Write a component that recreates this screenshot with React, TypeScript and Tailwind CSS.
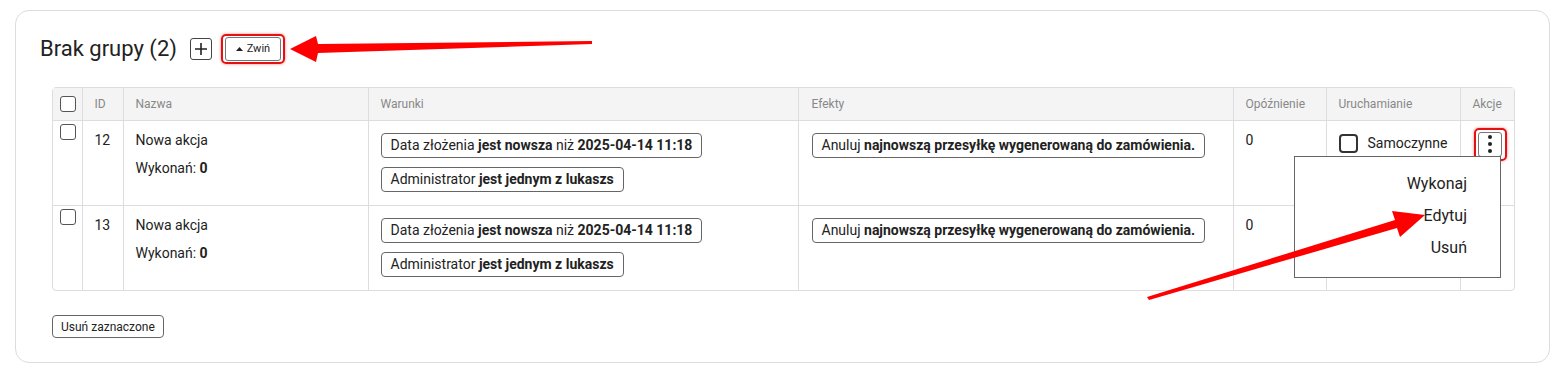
import React from "react";

const font = { fontFamily: "Roboto, 'Noto Sans', Arial, sans-serif" };

function Box() {
  return <span className="block w-[16px] h-[16px] rounded-[3px] border border-[#555] bg-white" />;
}

function Badge({ children }: { children: React.ReactNode }) {
  return (
    <span className="inline-block h-[25px] leading-[23px] px-[9px] border border-[#666] rounded-[4px] text-[14px] text-[#222] whitespace-nowrap">
      {children}
    </span>
  );
}

function Row({ id, menu }: { id: number; menu?: boolean }) {
  return (
    <tr className="h-[85px] align-top">
      <td className="border-t border-[#ddd] pl-[7px] pt-[3px]">
        <Box />
      </td>
      <td className="border-t border-l border-[#ddd] pl-[12px] pt-[9px] leading-[20px] text-[14px]">{id}</td>
      <td className="border-t border-l border-[#ddd] pl-[12px] pt-[9px] leading-[20px] text-[14px]">
        <div>Nowa akcja</div>
        <div className="mt-[8px]">
          Wykonań: <b>0</b>
        </div>
      </td>
      <td className="border-t border-l border-[#ddd] pl-[12px] pt-[12px]">
        <div className="flex flex-col items-start gap-[9px]">
          <Badge>
            Data złożenia <b>jest nowsza</b> niż <b>2025-04-14 11:18</b>
          </Badge>
          <Badge>
            Administrator <b>jest jednym z lukaszs</b>
          </Badge>
        </div>
      </td>
      <td className="border-t border-l border-[#ddd] pl-[13px] pt-[12px]">
        <Badge>
          Anuluj <b>najnowszą przesyłkę wygenerowaną do zamówienia.</b>
        </Badge>
      </td>
      <td className="border-t border-l border-[#ddd] pl-[12px] pt-[9px] leading-[20px] text-[14px]">0</td>
      <td className="border-t border-l border-[#ddd] pl-[12px] pt-[12px]">
        <div className="flex items-center gap-[10px] text-[14px]">
          <span className="block w-[19px] h-[19px] rounded-[4px] border-2 border-[#333]" />
          Samoczynne
        </div>
      </td>
      <td className="border-t border-l border-[#ddd] pt-[7px] relative">
        {menu && (
          <>
            <div className="ml-[13px] w-[33px] h-[33px] border-2 border-[#e51010] rounded-[5px] shadow-[0_0_3px_rgba(255,0,0,0.5)] flex items-center justify-center">
              <div className="w-[24px] h-[25px] border border-[#777] rounded-[3px] bg-white flex flex-col items-center justify-center gap-[3px]">
                <span className="w-[4px] h-[4px] rounded-full bg-[#222]" />
                <span className="w-[4px] h-[4px] rounded-full bg-[#222]" />
                <span className="w-[4px] h-[4px] rounded-full bg-[#222]" />
              </div>
            </div>
            <div className="absolute z-10 right-[13px] top-[35px] w-[207px] bg-white border border-[#666] pt-[11px] pb-[13px] pr-[33px] text-right text-[16px] leading-[32px] text-[#222]">
              <div>Wykonaj</div>
              <div>Edytuj</div>
              <div>Usuń</div>
            </div>
          </>
        )}
      </td>
    </tr>
  );
}

export default function App() {
  const th = "border-l border-[#ddd] text-left font-normal text-[12px] text-[#888] pl-[12px]";
  return (
    <div className="relative w-[1564px] h-[376px] bg-white pt-[10px] pl-[15px] pr-[14px] text-[#222]" style={font}>
      <div className="h-[353px] border border-[#dcdcdc] rounded-[14px] pl-[24px] pt-[23px]">
        <div className="flex items-center h-[30px]">
          <h2 className="text-[22px] text-[#222] leading-[26px]">Brak grupy (2)</h2>
          <button className="ml-[13px] w-[22px] h-[22px] border border-[#444] rounded-[3px] flex items-center justify-center">
            <svg width="14" height="14" viewBox="0 0 14 14">
              <path d="M7 1v12M1 7h12" stroke="#222" strokeWidth="1.6" />
            </svg>
          </button>
          <div className="ml-[9px] w-[64px] h-[30px] border-2 border-[#e51010] rounded-[5px] shadow-[0_0_3px_rgba(255,0,0,0.5)] flex items-center justify-center">
            <button className="w-[56px] h-[24px] border border-[#777] rounded-[3px] flex items-center justify-center gap-[4px] text-[11px] text-[#222]">
              <svg width="7" height="4" viewBox="0 0 7 4">
                <path d="M0 4L3.5 0L7 4Z" fill="#222" />
              </svg>
              Zwiń
            </button>
          </div>
        </div>

        <div className="mt-[23px] ml-[12px] w-[1463px] border border-[#ddd] rounded-[4px]">
          <table className="w-full border-collapse table-fixed">
            <colgroup>
              <col className="w-[29px]" />
              <col className="w-[41px]" />
              <col className="w-[245px]" />
              <col className="w-[430px]" />
              <col className="w-[435px]" />
              <col className="w-[93px]" />
              <col className="w-[134px]" />
              <col className="w-[54px]" />
            </colgroup>
            <thead>
              <tr className="h-[32px] bg-[#f4f4f4]">
                <th className="pl-[7px] text-left">
                  <Box />
                </th>
                <th className={th}>ID</th>
                <th className={th}>Nazwa</th>
                <th className={th}>Warunki</th>
                <th className={th + " pl-[13px]"}>Efekty</th>
                <th className={th}>Opóźnienie</th>
                <th className={th}>Uruchamianie</th>
                <th className={th + " pl-[11px]"}>Akcje</th>
              </tr>
            </thead>
            <tbody>
              <Row id={12} menu />
              <Row id={13} />
            </tbody>
          </table>
        </div>

        <button className="mt-[24px] ml-[12px] h-[23px] px-[8px] border border-[#666] rounded-[4px] text-[12px] text-[#222]">
          Usuń zaznaczone
        </button>
      </div>

      <svg className="absolute inset-0 pointer-events-none z-20" width="1564" height="376">
        <polygon points="592,41 318,44 316,36 290,49 316,62 318,53 592,44" fill="#f00" />
        <polygon points="1147,297 1395,220 1392,211 1425,215 1400,237 1397,228 1149,300" fill="#f00" />
      </svg>
    </div>
  );
}
